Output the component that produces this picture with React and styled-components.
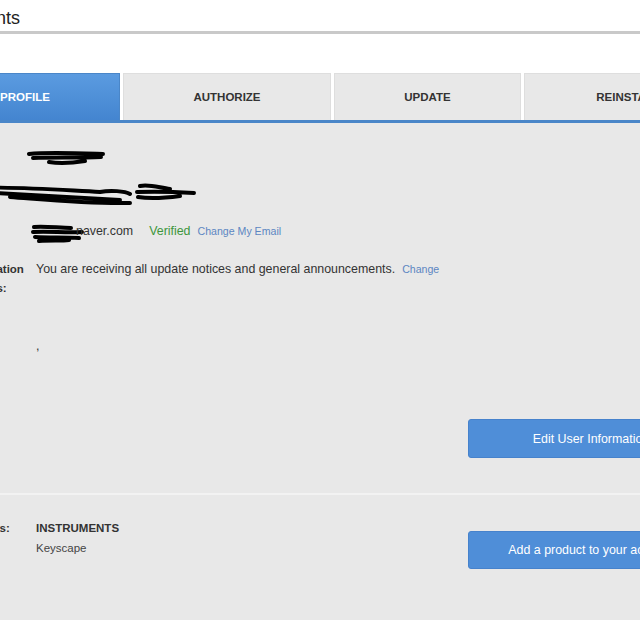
import React from 'react';
import styled, { createGlobalStyle } from 'styled-components';

const GlobalStyle = createGlobalStyle`
  html, body {
    margin: 0;
    padding: 0;
    background: #fff;
    overflow: hidden;
    font-family: "Liberation Sans", Arial, sans-serif;
    color: #333;
  }
`;

const tabs = [
  { label: 'PROFILE', width: 190, active: true },
  { label: 'AUTHORIZE', width: 208 },
  { label: 'UPDATE', width: 187 },
  { label: 'REINSTATE', width: 208 },
];

const App = () => {
  return (
    <>
      <GlobalStyle />
      <Page>
        <Header>
          <Title>Accounts</Title>
        </Header>

        <TabBar>
          {tabs.map((tab) => (
            <Tab key={tab.label} active={tab.active} style={{ width: tab.width }}>
              {tab.label}
            </Tab>
          ))}
        </TabBar>

        <Panel>
          <Section>
            <Row>
              <Label>Name:</Label>
              <Value>
                <Scribble width="80" height="20" viewBox="0 0 80 20" style={{ marginLeft: -9 }}>
                  <path d="M2 5 C20 3 45 4 76 5 M6 9 C25 8 50 9 74 8 M22 13 C35 15 45 14 58 12" />
                </Scribble>
              </Value>
            </Row>

            <Row mt={11}>
              <Label>Address:</Label>
              <Value>
                <WideScribble width="200" height="30" viewBox="0 0 200 30">
                  <path d="M-30 8 C10 6 60 10 100 12 M-20 12 C20 14 60 17 120 20 M10 17 C50 20 90 24 130 23 M100 12 C110 10 125 11 130 14 M140 6 C150 4 160 8 170 9 M137 12 C160 11 178 12 194 13 M138 17 C150 19 165 18 180 16" />
                </WideScribble>
              </Value>
            </Row>

            <Row mt={12}>
              <Label>Email:</Label>
              <Value>
                <Scribble width="54" height="22" viewBox="0 0 54 22" style={{ marginLeft: -5, marginRight: -9 }}>
                  <path d="M3 5 C15 4 28 6 40 6 M2 10 C18 9 35 11 51 10 M4 15 C18 16 34 15 48 16 M8 19 C20 18 30 19 38 18" />
                </Scribble>
                naver.com
                <Verified>Verified</Verified>
                <SmallLink>Change My Email</SmallLink>
              </Value>
            </Row>

            <Row mt={16}>
              <Label>Communication Preferences:</Label>
              <Value>
                You are receiving all update notices and general announcements.
                <SmallLink>Change</SmallLink>
              </Value>
            </Row>

            <Row mt={39}>
              <Label />
              <Value>,</Value>
            </Row>

            <ButtonRow>
              <ActionButton>Edit User Information</ActionButton>
            </ButtonRow>
          </Section>

          <ProductSection>
            <ProductDetails>
              <Label>My Products:</Label>
              <div>
                <ProductGroup>INSTRUMENTS</ProductGroup>
                <ProductName>Keyscape</ProductName>
              </div>
            </ProductDetails>
            <ActionButton small>Add a product to your account</ActionButton>
          </ProductSection>
        </Panel>
      </Page>
    </>
  );
};

const Page = styled.div`
  width: 880px;
  margin-left: -110px;
`;

const Header = styled.div`
  padding: 8px 0 3px 56px;
  border-bottom: 3px solid #c9c9c9;
  margin-bottom: 39px;
`;

const Title = styled.h1`
  margin: 0;
  font-size: 18px;
  line-height: 20px;
  font-weight: normal;
  color: #222;
`;

const TabBar = styled.div`
  display: flex;
  gap: 3px;
  padding-left: 40px;
  border-bottom: 3px solid #4a86c8;
`;

const Tab = styled.div`
  height: 47px;
  box-sizing: border-box;
  display: flex;
  align-items: center;
  justify-content: center;
  font-size: 11.5px;
  font-weight: bold;
  color: ${(p) => (p.active ? '#fff' : '#333')};
  background: ${(p) =>
    p.active ? 'linear-gradient(#5b9be0, #4485d0)' : '#e8e8e8'};
  border: 1px solid ${(p) => (p.active ? '#4a86c8' : '#dedede')};
  border-bottom: none;
`;

const Panel = styled.div`
  background: #e8e8e8;
  padding: 26px 56px 0 47px;
`;

const Section = styled.div`
  padding-bottom: 35px;
  border-bottom: 2px solid #f2f2f2;
`;

const Row = styled.div`
  display: grid;
  grid-template-columns: 89px 1fr;
  column-gap: 10px;
  margin-top: ${(p) => p.mt || 0}px;
  line-height: 19px;
`;

const Label = styled.div`
  font-size: 11.5px;
  font-weight: bold;
  color: #333;
  line-height: 19px;
`;

const Value = styled.div`
  display: flex;
  align-items: flex-start;
  flex-wrap: wrap;
  font-size: 12.4px;
  line-height: 19px;
  color: #333;
  min-height: 19px;
`;

const Scribble = styled.svg`
  display: block;
  fill: none;
  stroke: #000;
  stroke-width: 4;
  stroke-linecap: round;
`;

const WideScribble = styled(Scribble)`
  margin-left: -36px;
  overflow: visible;
`;

const Verified = styled.span`
  color: #3d963d;
  font-size: 12.4px;
  margin-left: 16px;
`;

const SmallLink = styled.span`
  color: #5c86c2;
  font-size: 10.6px;
  margin-left: 7px;
`;

const ButtonRow = styled.div`
  display: flex;
  justify-content: flex-end;
  margin-top: 63px;
`;

const ActionButton = styled.button`
  width: 246px;
  height: ${(p) => (p.small ? 38 : 39)}px;
  margin-top: ${(p) => (p.small ? 36 : 0)}px;
  background: #4f8ed8;
  border: 1px solid #4682cc;
  border-radius: 3px;
  color: #fff;
  font-family: "Liberation Sans", Arial, sans-serif;
  font-size: 12.4px;
`;

const ProductSection = styled.div`
  display: flex;
  justify-content: space-between;
  align-items: flex-start;
  height: 125px;
`;

const ProductDetails = styled.div`
  display: grid;
  grid-template-columns: 89px 1fr;
  column-gap: 10px;
  padding-top: 24px;
`;

const ProductGroup = styled.div`
  font-size: 11.5px;
  font-weight: bold;
  line-height: 19px;
  color: #333;
`;

const ProductName = styled.div`
  font-size: 11.5px;
  line-height: 21px;
  color: #444;
`;

export default App;
